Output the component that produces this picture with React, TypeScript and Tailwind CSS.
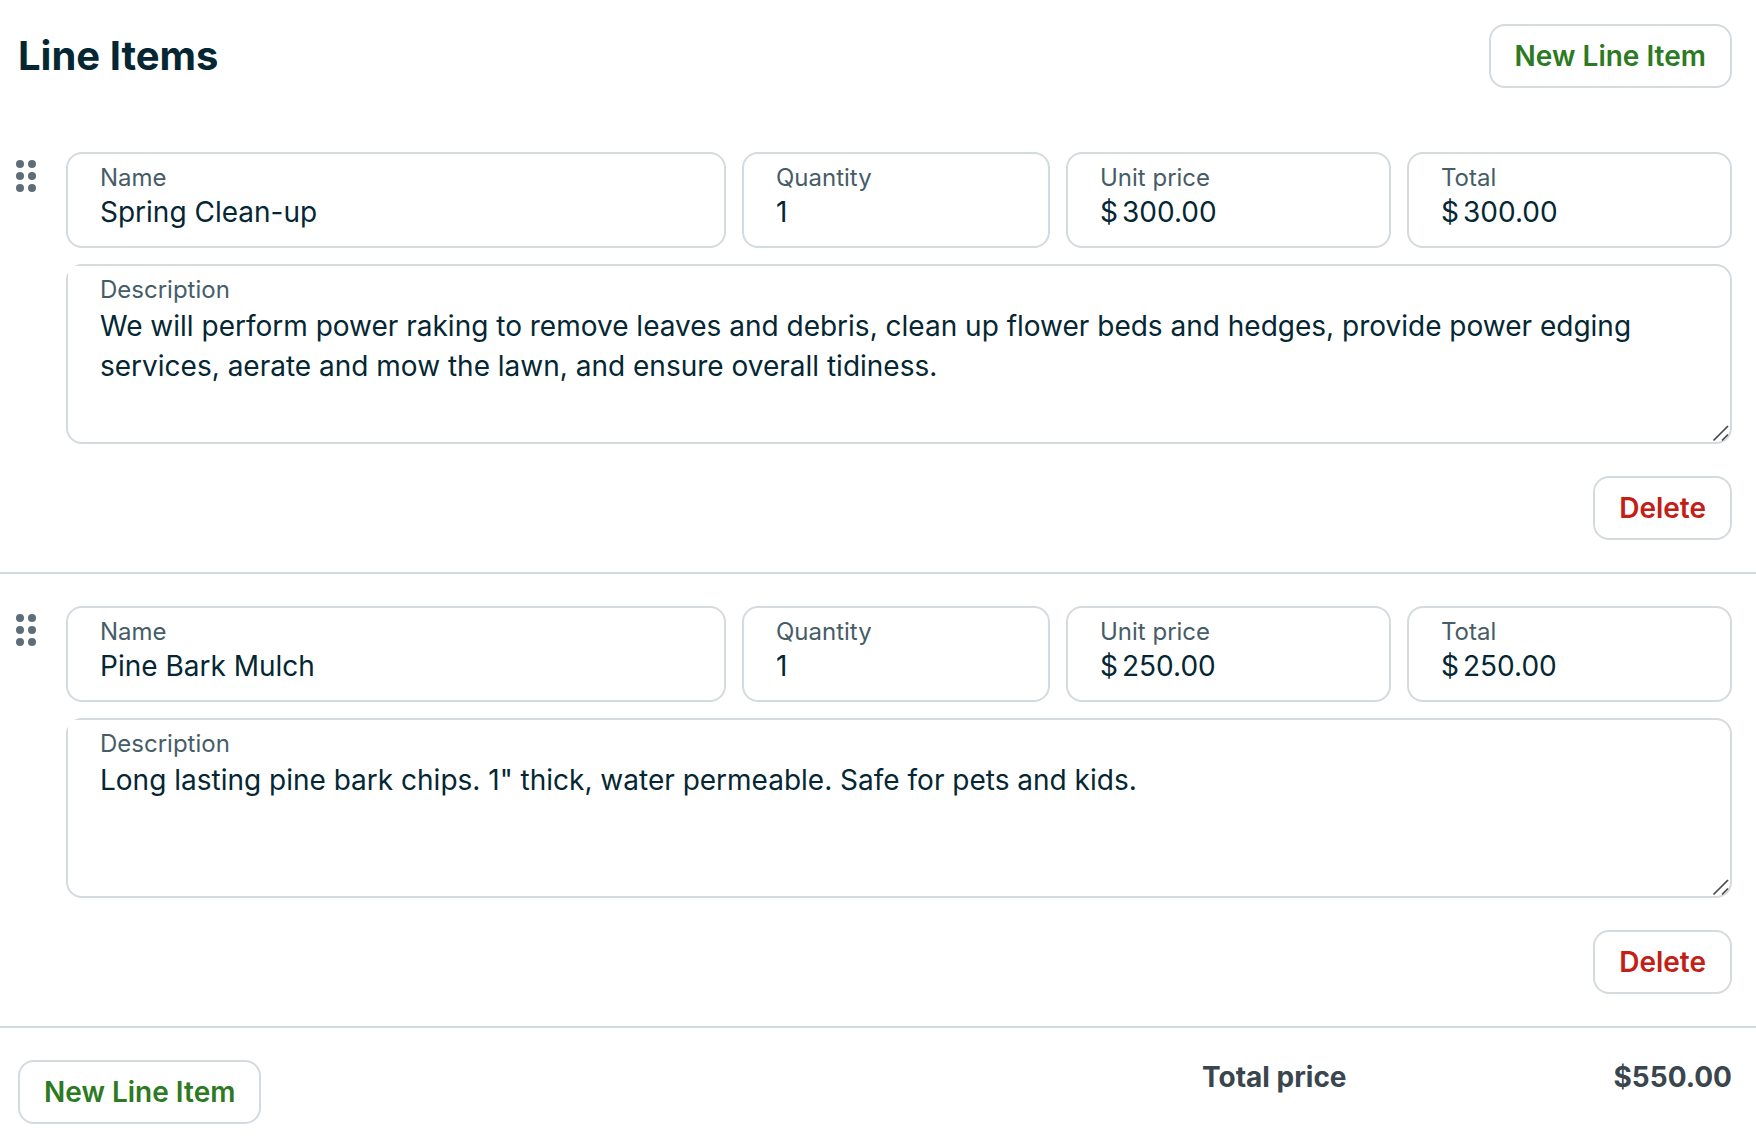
import { useId, useState } from 'react';

interface LineItem {
  id: number;
  name: string;
  quantity: string;
  unitPrice: string;
  total: string;
  description: string;
}

const initialItems: LineItem[] = [
  {
    id: 1,
    name: 'Spring Clean-up',
    quantity: '1',
    unitPrice: '300.00',
    total: '300.00',
    description:
      'We will perform power raking to remove leaves and debris, clean up flower beds and hedges, provide power edging services, aerate and mow the lawn, and ensure overall tidiness.',
  },
  {
    id: 2,
    name: 'Pine Bark Mulch',
    quantity: '1',
    unitPrice: '250.00',
    total: '250.00',
    description: 'Long lasting pine bark chips. 1" thick, water permeable. Safe for pets and kids.',
  },
];

interface FieldProps {
  label: string;
  value: string;
  prefix?: string;
  onChange: (value: string) => void;
}

function Field({ label, value, prefix, onChange }: FieldProps) {
  const id = useId();

  return (
    <div className="flex h-24 min-w-0 flex-col rounded-2xl border-2 border-[#d4dadd] px-8 pt-2">
      <label htmlFor={id} className="text-2xl leading-8 text-[#465d68]">
        {label}
      </label>
      <div className="flex gap-1 text-[28px] leading-9">
        {prefix && <span>{prefix}</span>}
        <input
          id={id}
          type="text"
          value={value}
          onChange={(e) => onChange(e.target.value)}
          className="h-9 w-full min-w-0 bg-transparent outline-none"
        />
      </div>
    </div>
  );
}

function DescriptionField({ label, value, onChange }: FieldProps) {
  const id = useId();

  return (
    <div className="relative">
      <textarea
        id={id}
        value={value}
        onChange={(e) => onChange(e.target.value)}
        className="block h-[180px] w-full resize-y rounded-2xl border-2 border-[#d4dadd] px-8 pt-10 text-[28px] leading-10 outline-none [&::-webkit-resizer]:hidden"
      />
      {/* Opaque label keeps scrolled text from showing behind it */}
      <label
        htmlFor={id}
        className="absolute top-0.5 right-8 left-0.5 bg-white pt-2 pl-8 text-2xl leading-8 text-[#465d68]"
      >
        {label}
      </label>
      <svg
        className="pointer-events-none absolute right-0.5 bottom-0.5"
        width="18"
        height="18"
        viewBox="0 0 18 18"
        stroke="#4a4a4a"
        strokeWidth="1.75"
        aria-hidden="true"
      >
        <path d="M1.5 16.5L16 2M10 16.5L16 10.5" />
      </svg>
    </div>
  );
}

function DragHandle() {
  return (
    <button type="button" aria-label="Reorder line item" className="mt-2 h-8 w-5 shrink-0 cursor-grab">
      <svg width="20" height="32" viewBox="0 0 20 32" fill="#5d6d79">
        <circle cx="4" cy="4" r="4" />
        <circle cx="16" cy="4" r="4" />
        <circle cx="4" cy="16" r="4" />
        <circle cx="16" cy="16" r="4" />
        <circle cx="4" cy="28" r="4" />
        <circle cx="16" cy="28" r="4" />
      </svg>
    </button>
  );
}

interface ButtonProps {
  children: string;
  destructive?: boolean;
  onClick: () => void;
}

function Button({ children, destructive = false, onClick }: ButtonProps) {
  return (
    <button
      type="button"
      onClick={onClick}
      className={`h-16 shrink-0 cursor-pointer rounded-2xl border-2 border-[#d4dadd] px-6 text-[28px] leading-9 font-semibold ${
        destructive ? 'text-[#c22014]' : 'text-[#2c7a22]'
      }`}
    >
      {children}
    </button>
  );
}

export default function App() {
  const [items, setItems] = useState(initialItems);

  const updateItem = (id: number, changes: Partial<LineItem>) => {
    setItems((prev) => prev.map((item) => (item.id === id ? { ...item, ...changes } : item)));
  };

  const addItem = () => {
    setItems((prev) => [
      ...prev,
      { id: Date.now(), name: '', quantity: '1', unitPrice: '0.00', total: '0.00', description: '' },
    ]);
  };

  const removeItem = (id: number) => setItems((prev) => prev.filter((item) => item.id !== id));

  const totalPrice = items.reduce((sum, item) => sum + (Number(item.total) || 0), 0);

  return (
    <main className="min-h-screen bg-white font-['Inter',sans-serif] text-[#042733]">
      <header className="flex items-center justify-between pt-6 pr-6 pb-8 pl-[18px]">
        <h1 className="text-[40px] leading-[48px] font-bold">Line Items</h1>
        <Button onClick={addItem}>New Line Item</Button>
      </header>

      {items.map((item) => (
        <section key={item.id} className="flex border-b-2 border-[#d4dadd] py-8 pr-6 pl-4">
          <DragHandle />
          <div className="ml-[30px] min-w-0 flex-1">
            <div className="grid grid-cols-[660fr_308fr_325fr_325fr] gap-4">
              <Field label="Name" value={item.name} onChange={(name) => updateItem(item.id, { name })} />
              <Field
                label="Quantity"
                value={item.quantity}
                onChange={(quantity) => updateItem(item.id, { quantity })}
              />
              <Field
                label="Unit price"
                prefix="$"
                value={item.unitPrice}
                onChange={(unitPrice) => updateItem(item.id, { unitPrice })}
              />
              <Field
                label="Total"
                prefix="$"
                value={item.total}
                onChange={(total) => updateItem(item.id, { total })}
              />
            </div>
            <div className="mt-4">
              <DescriptionField
                label="Description"
                value={item.description}
                onChange={(description) => updateItem(item.id, { description })}
              />
            </div>
            <div className="mt-8 flex justify-end">
              <Button destructive onClick={() => removeItem(item.id)}>
                Delete
              </Button>
            </div>
          </div>
        </section>
      ))}

      <footer className="flex items-start justify-between pt-8 pr-6 pl-[18px]">
        <Button onClick={addItem}>New Line Item</Button>
        <dl className="flex w-[530px] justify-between text-[28px] leading-[34px] font-bold text-[#3a464e]">
          <dt>Total price</dt>
          <dd>${totalPrice.toFixed(2)}</dd>
        </dl>
      </footer>
    </main>
  );
}
